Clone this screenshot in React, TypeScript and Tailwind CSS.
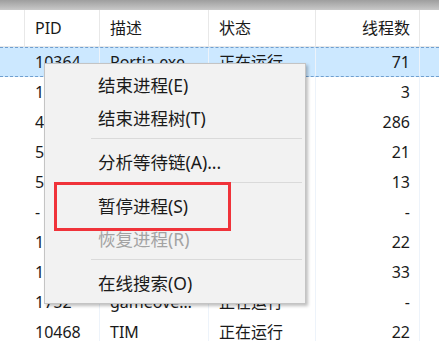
const FONT = { fontFamily: '"Noto Sans", "Noto Sans CJK SC", sans-serif' }

type Row = { pid: string; desc: string; status: string; threads: string; selected?: boolean }

const rows: Row[] = [
  { pid: '10364', desc: 'Portia.exe', status: '正在运行', threads: '71', selected: true },
  { pid: '1368', desc: 'svchost.exe', status: '正在运行', threads: '3' },
  { pid: '4112', desc: 'explorer.exe', status: '正在运行', threads: '286' },
  { pid: '5540', desc: 'chrome.exe', status: '正在运行', threads: '21' },
  { pid: '5216', desc: 'chrome.exe', status: '正在运行', threads: '13' },
  { pid: '-', desc: '系统中断', status: '', threads: '-' },
  { pid: '1204', desc: 'dwm.exe', status: '正在运行', threads: '22' },
  { pid: '1644', desc: 'csrss.exe', status: '正在运行', threads: '33' },
  { pid: '1752', desc: 'gameove…', status: '正在运行', threads: '-' },
  { pid: '10468', desc: 'TIM', status: '正在运行', threads: '22' },
]

function MenuItem({ label, disabled }: { label: string; disabled?: boolean }) {
  return (
    <div
      className={`flex h-[33px] items-center pl-[53px] text-[17.5px] ${disabled ? 'text-[#a3a3a3]' : 'text-[#1a1a1a]'}`}
    >
      {label}
    </div>
  )
}

function Sep() {
  return (
    <div className="h-[11px] pl-[46px] pr-[3px] pt-[3px]">
      <div className="h-px w-full bg-[#dadada]" />
    </div>
  )
}

export default function App() {
  return (
    <div className="relative h-[341px] w-[439px] overflow-hidden bg-white" style={FONT}>
      <div className="h-[10px] bg-gradient-to-b from-[#9e9e9e] to-[#c9c9c9]" />

      {/* header */}
      <div className="flex h-[37px] items-center border-b border-[#e8e8e8] text-[16px] text-[#1a1a1a]">
        <div className="h-full w-[25px] border-r border-[#e8e8e8]" />
        <div className="flex h-full w-[75px] items-center border-r border-[#e8e8e8] pl-[10px]">PID</div>
        <div className="flex h-full w-[109px] items-center border-r border-[#e8e8e8] pl-[10px]">描述</div>
        <div className="flex h-full w-[107px] items-center border-r border-[#e8e8e8] pl-[10px]">状态</div>
        <div className="flex h-full w-[104px] items-center justify-end border-r border-[#e8e8e8] pr-[9px]">线程数</div>
        <div className="flex-1" />
      </div>

      {/* rows */}
      <div className="text-[16px] text-[#1a1a1a]">
        {rows.map((r, i) => (
          <div
            key={i}
            className={`flex h-[30px] items-center ${r.selected ? 'border-y border-dashed border-[#6f9fd0] bg-[#cce8ff]' : ''}`}
          >
            <div className="h-full w-[25px]" />
            <div className="flex h-full w-[75px] items-center border-r border-[#edf3fa] pl-[10px]">{r.pid}</div>
            <div className="flex h-full w-[109px] items-center border-r border-[#edf3fa] pl-[10px]">{r.desc}</div>
            <div className="flex h-full w-[107px] items-center border-r border-[#edf3fa] pl-[10px]">{r.status}</div>
            <div className="flex h-full w-[104px] items-center justify-end border-r border-[#edf3fa] pr-[9px]">
              {r.threads}
            </div>
            <div className="flex-1" />
          </div>
        ))}
      </div>

      {/* context menu */}
      <div className="absolute left-[44px] top-[63px] w-[262px] border border-[#c4c4c4] bg-[#f2f2f2] pb-[3px] pt-[5px] shadow-[2px_2px_3px_rgba(0,0,0,0.25)]">
        <MenuItem label="结束进程(E)" />
        <MenuItem label="结束进程树(T)" />
        <Sep />
        <MenuItem label="分析等待链(A)..." />
        <Sep />
        <MenuItem label="暂停进程(S)" />
        <MenuItem label="恢复进程(R)" disabled />
        <Sep />
        <MenuItem label="在线搜索(O)" />
      </div>

      {/* highlight box */}
      <div className="absolute left-[54px] top-[182px] h-[49px] w-[177px] border-[3px] border-[#f0333a]" />
    </div>
  )
}
